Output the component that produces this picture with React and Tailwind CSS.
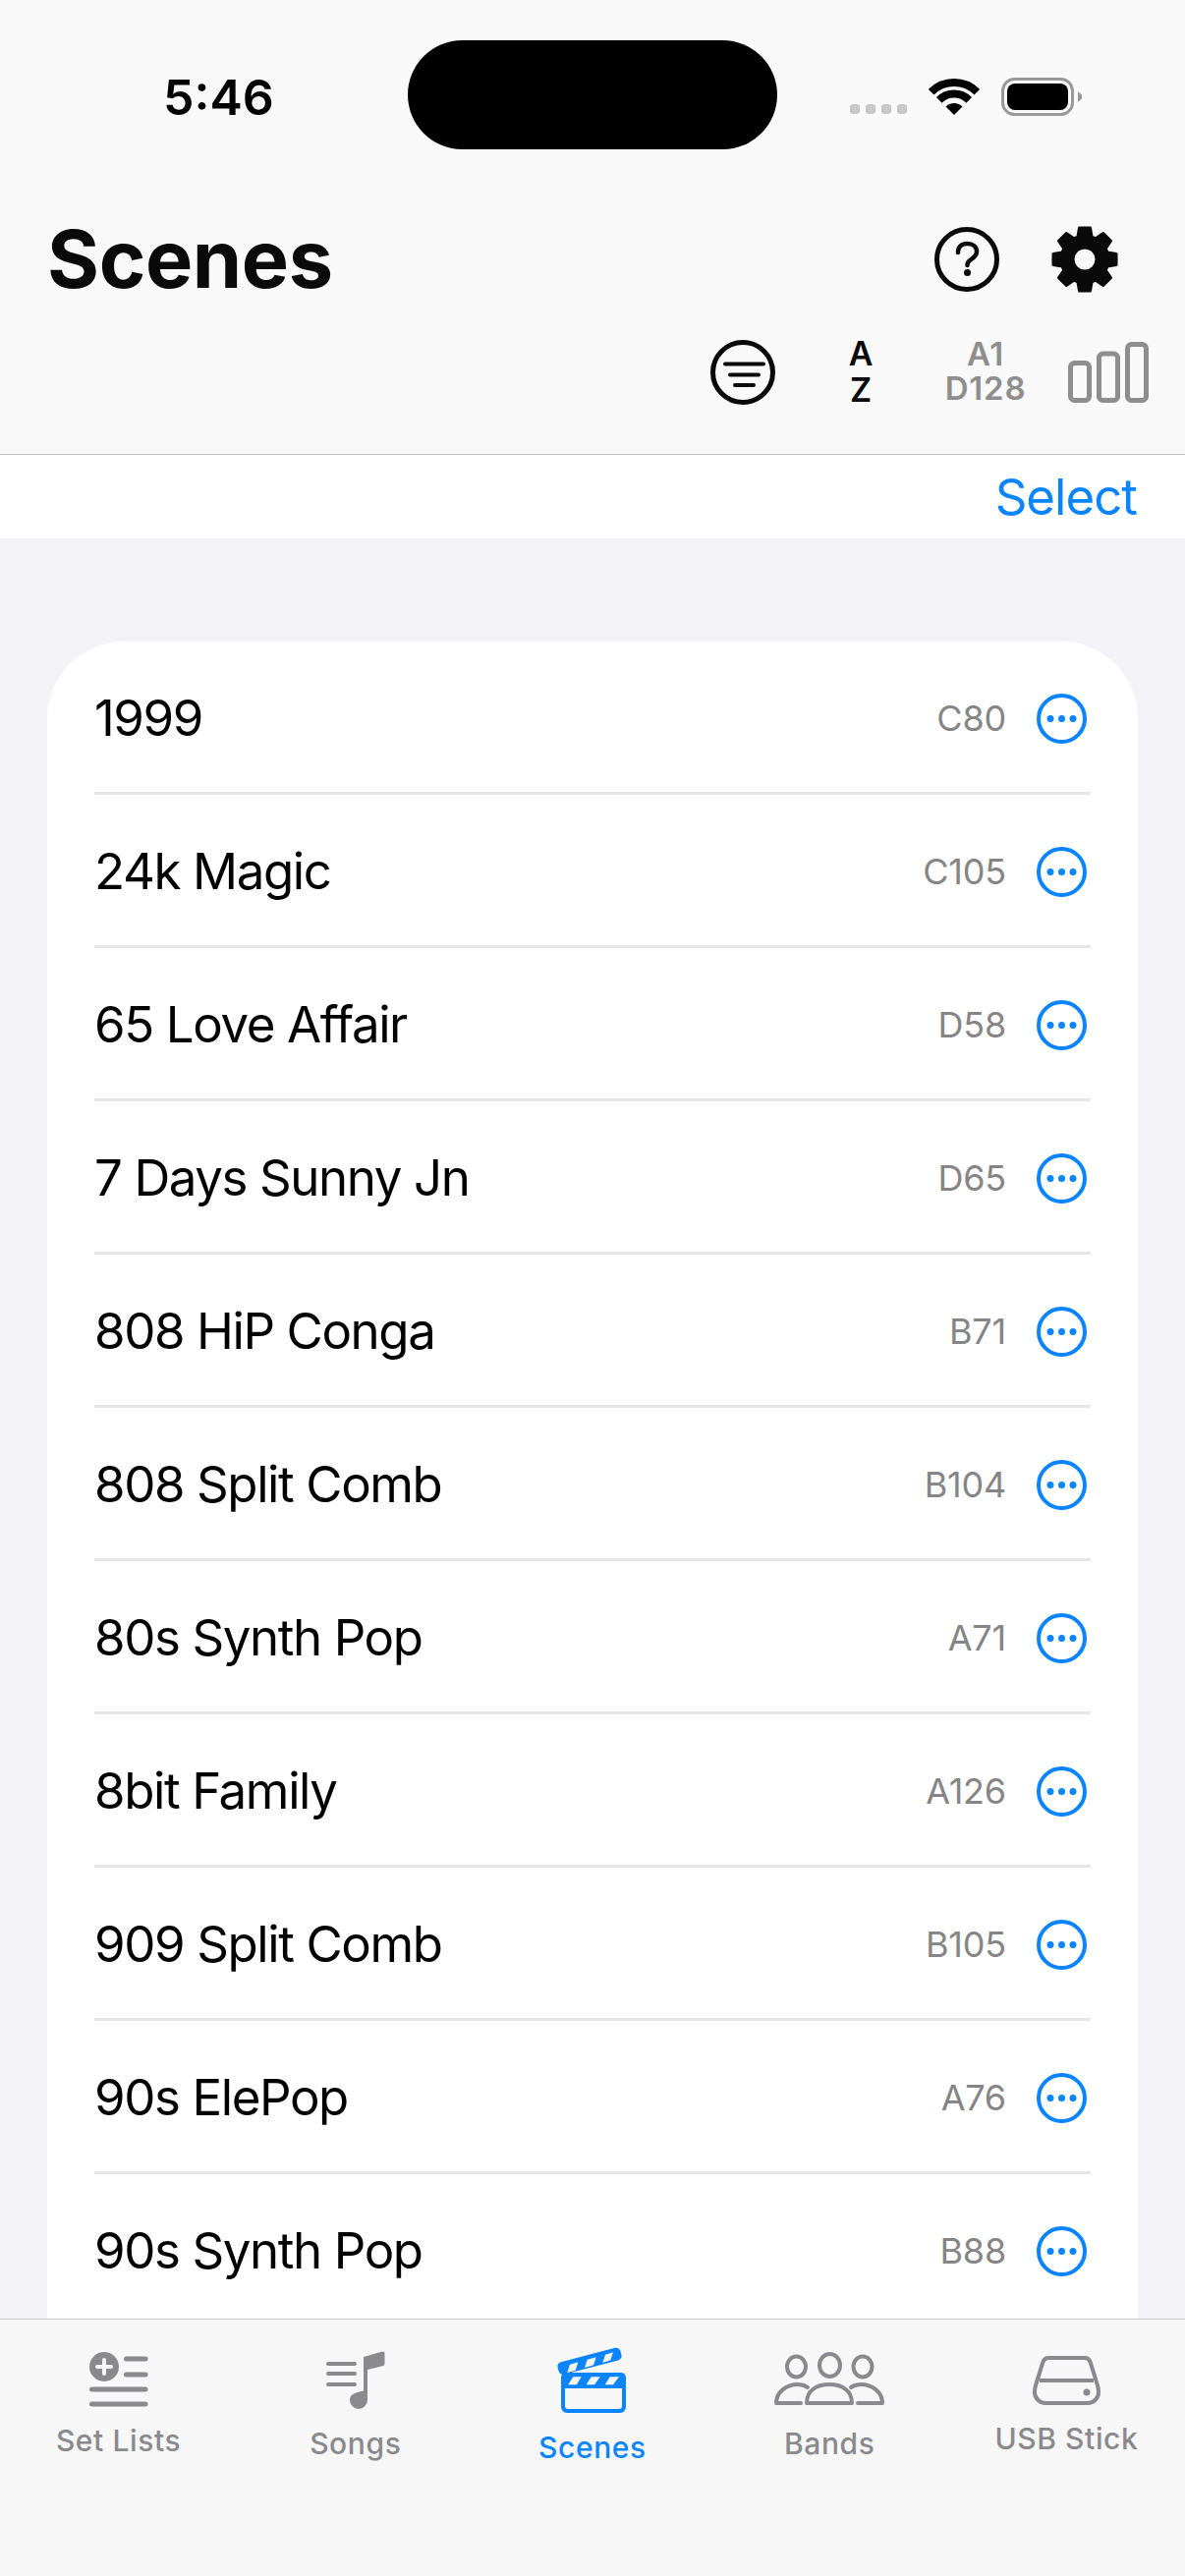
import React from 'react';

const scenes = [
  ['1999', 'C80'],
  ['24k Magic', 'C105'],
  ['65 Love Affair', 'D58'],
  ['7 Days Sunny Jn', 'D65'],
  ['808 HiP Conga', 'B71'],
  ['808 Split Comb', 'B104'],
  ['80s Synth Pop', 'A71'],
  ['8bit Family', 'A126'],
  ['909 Split Comb', 'B105'],
  ['90s ElePop', 'A76'],
  ['90s Synth Pop', 'B88'],
];

function gearPoints() {
  const pts = [];
  for (let i = 0; i < 8; i++) {
    const a = (i * Math.PI) / 4 - Math.PI / 2;
    const steps = [[24, -0.3], [32.5, -0.17], [32.5, 0.17], [24, 0.3]];
    steps.forEach(([r, d]) => {
      pts.push(`${(34 + r * Math.cos(a + d)).toFixed(2)},${(34 + r * Math.sin(a + d)).toFixed(2)}`);
    });
  }
  return pts.join(' ');
}

function Wifi() {
  return (
    <svg width="52" height="38" viewBox="0 0 52 38" className="mt-[2px]">
      <path d="M2.67 13.67A33 33 0 0 1 49.33 13.67" fill="none" stroke="#000" strokeWidth="8" />
      <path d="M10.8 21.8A21.5 21.5 0 0 1 41.2 21.8" fill="none" stroke="#000" strokeWidth="8" />
      <path d="M26 37L17.5 28.5A12 12 0 0 1 34.5 28.5Z" fill="#000" />
    </svg>
  );
}

function Battery() {
  return (
    <svg width="82" height="39" viewBox="0 0 82 39" className="mt-[2px]">
      <rect x="1.5" y="1.5" width="71" height="36" rx="12" fill="none" stroke="#999" strokeWidth="3" />
      <rect x="6" y="6" width="62" height="27" rx="8" fill="#000" />
      <path d="M78 14L82 17.5V21.5L78 25Z" fill="#999" />
    </svg>
  );
}

function MoreButton() {
  return (
    <svg width="51" height="51" viewBox="0 0 51 51">
      <circle cx="25.5" cy="25.5" r="23.5" fill="none" stroke="#0a84ff" strokeWidth="4" />
      <circle cx="14" cy="25.5" r="3.5" fill="#0a84ff" />
      <circle cx="25.5" cy="25.5" r="3.5" fill="#0a84ff" />
      <circle cx="37" cy="25.5" r="3.5" fill="#0a84ff" />
    </svg>
  );
}

function SetListsIcon() {
  return (
    <svg width="60" height="56" viewBox="0 0 60 56" fill="none" stroke="#8a8a8e" strokeWidth="5" strokeLinecap="round">
      <circle cx="15" cy="15" r="15" fill="#8a8a8e" stroke="none" />
      <path d="M15 8V22M8 15H22" stroke="#f7f7f7" strokeWidth="4" />
      <path d="M37.5 7H57M37.5 23H57M2.5 38H57M2.5 53H57" />
    </svg>
  );
}

function SongsIcon() {
  return (
    <svg width="60" height="62" viewBox="0 0 60 62" fill="none">
      <path d="M2 14H29M2 24H29M2 35H29" stroke="#8a8a8e" strokeWidth="4" strokeLinecap="round" />
      <path
        d="M38 7L57 1.5Q59.5 1 59.5 3.5V14Q59.5 15.5 58 16L42 20V51A9 9 0 0 1 24 51C24 46 28 44 32 43L38 41.5Z"
        fill="#8a8a8e"
      />
    </svg>
  );
}

function ScenesIcon() {
  return (
    <svg width="72" height="72" viewBox="0 0 72 72">
      <rect x="-33" y="-6.5" width="66" height="13" rx="4.5" fill="#0a84ff" transform="translate(33 15.3) rotate(-14.6)" />
      <g fill="#f7f7f7">
        <polygon points="10.3,27 13,18.7 21.3,16.3 18.7,24.7" />
        <polygon points="28,22 30.7,13.7 39.7,11.3 37,19.3" />
        <polygon points="46.3,17 49,8.7 57,6.3 54.3,14.3" />
      </g>
      <path
        fillRule="evenodd"
        fill="#0a84ff"
        d="M9 27H65A5 5 0 0 1 70 32V62A6 6 0 0 1 64 68H10A6 6 0 0 1 4 62V32A5 5 0 0 1 9 27ZM8 43V61A3 3 0 0 0 11 64H63A3 3 0 0 0 66 61V43Z"
      />
      <g fill="#f7f7f7">
        <polygon points="11.3,39.3 16.3,31.3 24.7,31.3 19.7,39.3" />
        <polygon points="29.7,39.3 34.7,31.3 43.7,31.3 38,39.3" />
        <polygon points="48.7,39.3 53.7,31.3 63,31.3 57,39.3" />
      </g>
    </svg>
  );
}

function BandsIcon() {
  return (
    <svg width="112" height="54" viewBox="0 0 112 54" fill="none" stroke="#8a8a8e" strokeWidth="4" strokeLinejoin="round" strokeLinecap="round">
      <ellipse cx="22.5" cy="15" rx="9.5" ry="10.5" />
      <ellipse cx="56.5" cy="13.5" rx="10.5" ry="11.5" />
      <ellipse cx="90" cy="15" rx="9.5" ry="10.5" />
      <path d="M33 52C33 40 42 33 56 33C70 33 79 40 79 52Z" />
      <path d="M27 52H2C2 41 12 33 24 33C28 33 31 34 34 36" />
      <path d="M85 52H110C110 41 100 33 88 33C84 33 81 34 78 36" />
    </svg>
  );
}

function UsbIcon() {
  return (
    <svg width="69" height="50" viewBox="0 0 69 50" fill="none" stroke="#8a8a8e" strokeWidth="4">
      <path d="M16 2H53Q57 2 58.5 6L66 30Q67 33 67 37A11 11 0 0 1 56 48H13A11 11 0 0 1 2 37Q2 33 3 30L10.5 6Q12 2 16 2Z" />
      <path d="M7 25H62" />
      <circle cx="55" cy="37" r="3.5" fill="#8a8a8e" stroke="none" />
    </svg>
  );
}

const tabs = [
  { label: 'Set Lists', icon: <SetListsIcon />, box: 'pt-[33px] gap-[16px] text-[#8a8a8e]' },
  { label: 'Songs', icon: <SongsIcon />, box: 'pt-[31px] gap-[15px] text-[#8a8a8e]' },
  { label: 'Scenes', icon: <ScenesIcon />, box: 'pt-[27px] gap-[13px] text-[#0a84ff]' },
  { label: 'Bands', icon: <BandsIcon />, box: 'pt-[33px] gap-[21px] text-[#8a8a8e]' },
  { label: 'USB Stick', icon: <UsbIcon />, box: 'pt-[37px] gap-[16px] text-[#8a8a8e]' },
];

export default function App() {
  return (
    <div className="w-[1206px] h-[2622px] flex flex-col overflow-hidden bg-[#f2f2f7] font-['Inter',sans-serif] text-black">
      <header className="bg-[#f9f9f9] border-b border-[#bdbdbd] h-[463px] shrink-0">
        <div className="pt-[41px] flex items-center">
          <div className="w-[415px] pl-[166px] pt-[4px] text-[50px] leading-[60px] font-semibold">5:46</div>
          <div className="w-[376px] h-[111px] rounded-[56px] bg-black" />
          <div className="ml-[74px] mt-[29px] flex gap-[6px]">
            <span className="w-[10px] h-[10px] rounded-[3px] bg-[#c8c8c8]" />
            <span className="w-[10px] h-[10px] rounded-[3px] bg-[#c8c8c8]" />
            <span className="w-[10px] h-[10px] rounded-[3px] bg-[#c8c8c8]" />
            <span className="w-[10px] h-[10px] rounded-[3px] bg-[#c8c8c8]" />
          </div>
          <div className="ml-[22px] mt-[2px]"><Wifi /></div>
          <div className="ml-[22px] mt-[2px]"><Battery /></div>
        </div>

        <div className="mt-[62px] h-[100px] pl-[48px] pr-[68px] flex items-center justify-between">
          <h1 className="text-[81px] leading-[100px] font-bold tracking-[-0.4px] text-[#0a0a0a]">Scenes</h1>
          <div className="flex items-center gap-[53px]">
            <svg width="66" height="66" viewBox="0 0 66 66" fill="none" stroke="#0a0a0a">
              <circle cx="33" cy="33" r="30.5" strokeWidth="5" />
              <path d="M24 26C24 20 28 17 33.5 17C39 17 43 20 43 25C43 30 39 32 36 34C34 35.5 33.5 37 33.5 39" strokeWidth="4.5" strokeLinecap="round" />
              <circle cx="33.5" cy="46.5" r="3.5" fill="#0a0a0a" stroke="none" />
            </svg>
            <svg width="68" height="68" viewBox="0 0 68 68">
              <path
                fillRule="evenodd"
                fill="#0a0a0a"
                stroke="#0a0a0a"
                strokeWidth="3"
                strokeLinejoin="round"
                d={`M${gearPoints().split(' ').join(' L')} Z M46 34 A12 12 0 1 0 22 34 A12 12 0 1 0 46 34 Z`}
              />
            </svg>
          </div>
        </div>

        <div className="mt-[20px] h-[90px] pr-[37px] flex items-center justify-end">
          <svg width="66" height="66" viewBox="0 0 66 66" fill="none" stroke="#0a0a0a">
            <circle cx="33" cy="33" r="30.5" strokeWidth="5" />
            <path d="M15 24.5H54M20 35.5H49M25 46H44" strokeWidth="4" strokeLinecap="round" />
          </svg>
          <div className="ml-[57px] w-[60px] -mt-[2px] flex flex-col items-center text-[34px] leading-[37px] font-semibold text-[#0a0a0a]">
            <span>A</span>
            <span>Z</span>
          </div>
          <div className="ml-[47px] w-[100px] -mt-[2px] flex flex-col items-center text-[33px] leading-[35px] font-semibold tracking-[0.8px] text-[#8e8e8e]">
            <span>A1</span>
            <span>D128</span>
          </div>
          <svg className="ml-[34px]" width="82" height="62" viewBox="0 0 82 62" fill="none" stroke="#8e8e8e" strokeWidth="5">
            <rect x="2.5" y="21.5" width="19" height="38" rx="4" />
            <rect x="31.5" y="12" width="19" height="47.5" rx="4" />
            <rect x="60.5" y="2.5" width="19" height="57" rx="4" />
          </svg>
        </div>
      </header>

      <div className="h-[85px] shrink-0 bg-white pr-[49px] flex items-center justify-end">
        <span className="text-[51px] leading-[60px] tracking-[-1px] text-[#0a84ff]">Select</span>
      </div>

      <main className="flex-1 min-h-0 overflow-hidden pt-[105px] px-[48px]">
        <div className="bg-white rounded-[78px] pb-[156px]">
          {scenes.map(([name, code]) => (
            <div key={name} className="pl-[48px] pr-[48px]">
              <div className="h-[156px] pt-[3px] pr-[4px] border-b-[3px] border-[#e6e6e6] flex items-center justify-between">
                <span className="text-[51px] leading-[60px] tracking-[-1.4px]">{name}</span>
                <div className="flex items-center gap-[31px]">
                  <span className="text-[36px] leading-[44px] tracking-[-0.2px] text-[#858585]">{code}</span>
                  <MoreButton />
                </div>
              </div>
            </div>
          ))}
        </div>
      </main>

      <nav className="h-[262px] shrink-0 bg-[#f7f7f7] border-t border-[#c6c6c8] grid grid-cols-5">
        {tabs.map((tab) => (
          <div key={tab.label} className={`flex flex-col items-center ${tab.box}`}>
            {tab.icon}
            <span className="text-[30px] leading-[36px] font-medium tracking-[0.6px]">{tab.label}</span>
          </div>
        ))}
      </nav>
    </div>
  );
}
